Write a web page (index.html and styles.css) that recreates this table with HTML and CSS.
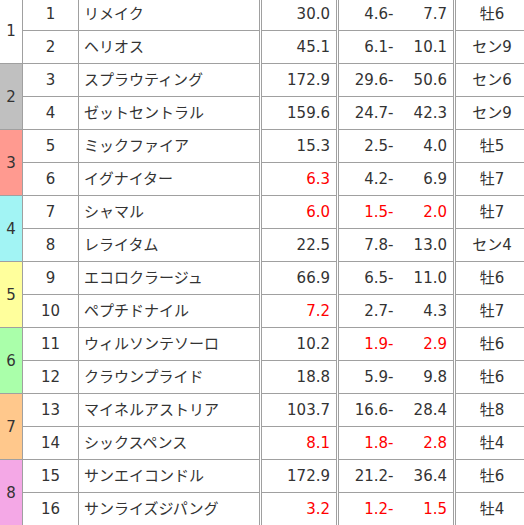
FILE: index.html
```html
<!DOCTYPE html>
<html lang="ja">
<head>
<meta charset="utf-8">
<link rel="stylesheet" href="styles.css">
</head>
<body>
<div class="viewport">
<table class="odds">
<colgroup>
<col class="c-frame"><col class="c-num"><col class="c-name"><col class="c-odds"><col class="c-low"><col class="c-high"><col class="c-sex">
</colgroup>
<tbody>
<tr><td class="frame f1" rowspan="2">1</td><td class="num">1</td><td class="name">リメイク</td><td class="odd">30.0</td><td class="low">4.6-</td><td class="high">7.7</td><td class="sex">牡6</td></tr>
<tr><td class="num">2</td><td class="name">ヘリオス</td><td class="odd">45.1</td><td class="low">6.1-</td><td class="high">10.1</td><td class="sex">セン9</td></tr>
<tr><td class="frame f2" rowspan="2">2</td><td class="num">3</td><td class="name">スプラウティング</td><td class="odd">172.9</td><td class="low">29.6-</td><td class="high">50.6</td><td class="sex">セン6</td></tr>
<tr><td class="num">4</td><td class="name">ゼットセントラル</td><td class="odd">159.6</td><td class="low">24.7-</td><td class="high">42.3</td><td class="sex">セン9</td></tr>
<tr><td class="frame f3" rowspan="2">3</td><td class="num">5</td><td class="name">ミックファイア</td><td class="odd">15.3</td><td class="low">2.5-</td><td class="high">4.0</td><td class="sex">牡5</td></tr>
<tr><td class="num">6</td><td class="name">イグナイター</td><td class="odd hot">6.3</td><td class="low">4.2-</td><td class="high">6.9</td><td class="sex">牡7</td></tr>
<tr><td class="frame f4" rowspan="2">4</td><td class="num">7</td><td class="name">シャマル</td><td class="odd hot">6.0</td><td class="low hot">1.5-</td><td class="high hot">2.0</td><td class="sex">牡7</td></tr>
<tr><td class="num">8</td><td class="name">レライタム</td><td class="odd">22.5</td><td class="low">7.8-</td><td class="high">13.0</td><td class="sex">セン4</td></tr>
<tr><td class="frame f5" rowspan="2">5</td><td class="num">9</td><td class="name">エコロクラージュ</td><td class="odd">66.9</td><td class="low">6.5-</td><td class="high">11.0</td><td class="sex">牡6</td></tr>
<tr><td class="num">10</td><td class="name">ペプチドナイル</td><td class="odd hot">7.2</td><td class="low">2.7-</td><td class="high">4.3</td><td class="sex">牡7</td></tr>
<tr><td class="frame f6" rowspan="2">6</td><td class="num">11</td><td class="name">ウィルソンテソーロ</td><td class="odd">10.2</td><td class="low hot">1.9-</td><td class="high hot">2.9</td><td class="sex">牡6</td></tr>
<tr><td class="num">12</td><td class="name">クラウンプライド</td><td class="odd">18.8</td><td class="low">5.9-</td><td class="high">9.8</td><td class="sex">牡6</td></tr>
<tr><td class="frame f7" rowspan="2">7</td><td class="num">13</td><td class="name">マイネルアストリア</td><td class="odd">103.7</td><td class="low">16.6-</td><td class="high">28.4</td><td class="sex">牡8</td></tr>
<tr><td class="num">14</td><td class="name">シックスペンス</td><td class="odd hot">8.1</td><td class="low hot">1.8-</td><td class="high hot">2.8</td><td class="sex">牡4</td></tr>
<tr><td class="frame f8" rowspan="2">8</td><td class="num">15</td><td class="name">サンエイコンドル</td><td class="odd">172.9</td><td class="low">21.2-</td><td class="high">36.4</td><td class="sex">牡6</td></tr>
<tr><td class="num">16</td><td class="name">サンライズジパング</td><td class="odd hot">3.2</td><td class="low hot">1.2-</td><td class="high hot">1.5</td><td class="sex">牡4</td></tr>
</tbody>
</table>
</div>
</body>
</html>
```
FILE: styles.css
```css
html, body {
  margin: 0;
  padding: 0;
  background: #fff;
  overflow: hidden;
}
.viewport {
  width: 524px;
  height: 525px;
  overflow: hidden;
}
.odds {
  border-collapse: collapse;
  table-layout: fixed;
  width: 529px;
  margin: -3px 0 0 -1px;
  font-family: "DejaVu Sans", "Noto Sans CJK JP", sans-serif;
  font-size: 15px;
  color: #333;
}
.c-frame { width: 23px; }
.c-num { width: 56px; }
.c-name { width: 182px; }
.c-odds { width: 77px; }
.c-low { width: 58px; }
.c-high { width: 59px; }
.c-sex { width: 74px; }
.odds td {
  border: 1px solid #a0a0a0;
  height: 33px;
  box-sizing: border-box;
  padding: 0 5px;
  white-space: nowrap;
  line-height: 20px;
}
.odds td.frame { text-align: center; padding: 0; }
.odds td.num { text-align: center; }
.odds td.name { text-align: left; }
.odds td.odd {
  text-align: right;
  border-left: 3px double #a0a0a0;
  border-right: 3px double #a0a0a0;
  padding-right: 6px;
}
.odds td.low { text-align: right; border-right: none; padding-right: 2px; }
.odds td.high { text-align: right; border-left: none; border-right: 3px double #a0a0a0; padding-right: 6px; }
.odds td.sex { text-align: center; }
.odds td.hot { color: #ff0000; }
.f1 { background: #ffffff; }
.f2 { background: #c0c0c0; }
.f3 { background: #ff9a90; }
.f4 { background: #a2f4f4; }
.f5 { background: #ffff9c; }
.f6 { background: #aaffaa; }
.f7 { background: #ffc88c; }
.f8 { background: #f4a8e6; }
```
